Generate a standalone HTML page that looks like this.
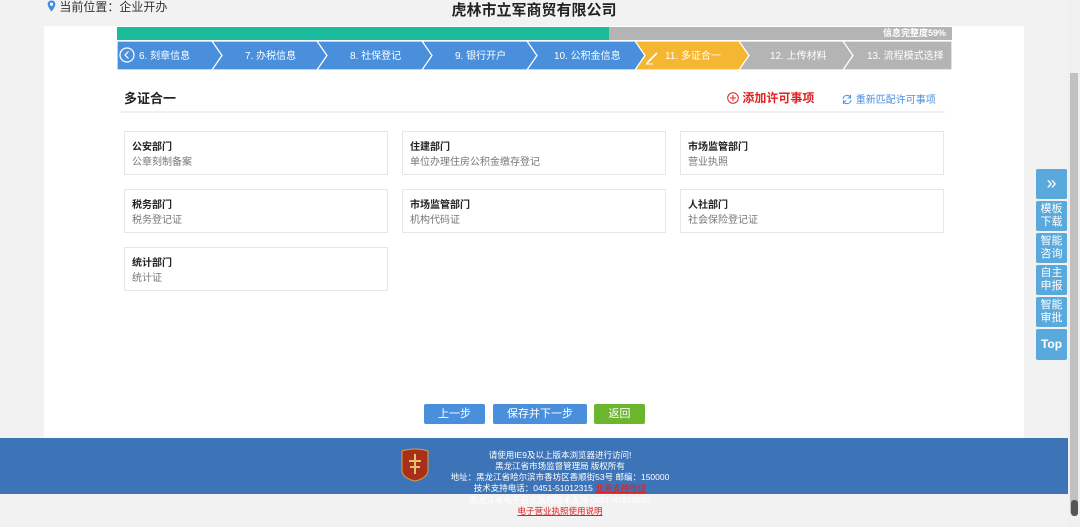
<!DOCTYPE html>
<html><head><meta charset="utf-8"><style>
*{margin:0;padding:0;box-sizing:border-box}
body{width:1080px;height:527px;overflow:hidden;background:#f2f2f2;font-family:"Liberation Sans","Noto Sans CJK SC",sans-serif;position:relative}
.abs{position:absolute}
.card{position:absolute;width:264px;height:44px;border:1px solid #e3e6ea;background:#fff;padding:9px 0 0 7px}
.card b{display:block;font-size:10px;color:#222;line-height:14px}
.card span{display:block;font-size:10px;color:#777;line-height:16px}
.btn{position:absolute;top:404px;height:20px;color:#fff;font-size:11px;text-align:center;line-height:20px;border-radius:2px}
.side{position:absolute;left:1036px;width:31px;background:#5aa9dc;color:#fff;font-size:11px;text-align:center;line-height:13px;border-radius:2px}
</style></head><body>
<div class="abs" style="left:47px;top:0;font-size:12px;color:#333;line-height:14px"><svg width="9" height="12" viewBox="0 0 9 12" style="vertical-align:-1px"><path d="M4.5 0.5C2.3 0.5 0.7 2.1 0.7 4.2 0.7 7 4.5 11.5 4.5 11.5S8.3 7 8.3 4.2C8.3 2.1 6.7 0.5 4.5 0.5z" fill="#3a8ee6"/><circle cx="4.5" cy="4.2" r="1.6" fill="#fff"/></svg> 当前位置：企业开办</div>
<div class="abs" style="left:0;width:1068px;top:-1px;text-align:center;font-size:15px;font-weight:bold;color:#222">虎林市立军商贸有限公司</div>
<div class="abs" style="left:44px;top:26px;width:980px;height:412px;background:#fff"></div>
<div class="abs" style="left:117px;top:27px;width:492px;height:13px;background:#1abc9c"></div>
<div class="abs" style="left:609px;top:27px;width:343px;height:13px;background:#b4b4b4;color:#fff;font-size:9px;font-weight:bold;text-align:right;padding-right:6px;line-height:13px">信息完整度59%</div>
<svg class="abs" style="left:117px;top:41px" width="835" height="29">
<g stroke="#fff" stroke-width="1.2">
<polygon points="0,0 95,0 105,14.5 95,29 0,29" fill="#4a8fdc"/>
<polygon points="95,0 200,0 210,14.5 200,29 95,29 105,14.5" fill="#4a8fdc"/>
<polygon points="200,0 305,0 315,14.5 305,29 200,29 210,14.5" fill="#4a8fdc"/>
<polygon points="305,0 410,0 420,14.5 410,29 305,29 315,14.5" fill="#4a8fdc"/>
<polygon points="410,0 518,0 528,14.5 518,29 410,29 420,14.5" fill="#4a8fdc"/>
<polygon points="518,0 622,0 632,14.5 622,29 518,29 528,14.5" fill="#f5b731"/>
<polygon points="622,0 726,0 736,14.5 726,29 622,29 632,14.5" fill="#b4b4b4"/>
<polygon points="726,0 835,0 835,29 726,29 736,14.5" fill="#b4b4b4"/>
</g>
<circle cx="10" cy="14" r="7" fill="none" stroke="#fff" stroke-width="1.2"/><path d="M11.5 10.5L8 14L11.5 17.5" fill="none" stroke="#fff" stroke-width="1.2"/>
<path d="M531 21L538 14M531 21L530 22.5M538 14L540 12" stroke="#fff" stroke-width="1.6"/><path d="M529 23h7" stroke="#fff"/>
<g fill="#fff" font-size="10" font-family="Liberation Sans,Noto Sans CJK SC,sans-serif">
<text x="22" y="18">6. 刻章信息</text><text x="128" y="18">7. 办税信息</text><text x="233" y="18">8. 社保登记</text><text x="338" y="18">9. 银行开户</text><text x="437" y="18">10. 公积金信息</text><text x="548" y="18">11. 多证合一</text><text x="653" y="18">12. 上传材料</text><text x="750" y="18">13. 流程模式选择</text>
</g></svg>
<div class="abs" style="left:124px;top:88px;font-size:13px;font-weight:bold;color:#222">多证合一</div>
<div class="abs" style="left:120px;top:111px;width:825px;height:2px;background:#f0f0f0"></div>
<div class="abs" style="left:727px;top:89px;font-size:12px;font-weight:bold;color:#e02020"><svg width="12" height="12" style="vertical-align:-2px"><circle cx="6" cy="6" r="5.3" fill="none" stroke="#e02020"/><path d="M3 6h6M6 3v6" stroke="#e02020"/></svg> 添加许可事项</div>
<div class="abs" style="left:841px;top:91px;font-size:10px;color:#4a8fdc"><svg width="12" height="11" style="vertical-align:-2px"><path d="M2 5A4 4 0 0 1 9.5 3.5M10 6A4 4 0 0 1 2.5 7.5" fill="none" stroke="#4a8fdc"/><path d="M9.5 1v3h-3M2.5 10V7h3" fill="none" stroke="#4a8fdc"/></svg> 重新匹配许可事项</div>
<div class="card" style="left:124px;top:131px"><b>公安部门</b><span>公章刻制备案</span></div>
<div class="card" style="left:402px;top:131px"><b>住建部门</b><span>单位办理住房公积金缴存登记</span></div>
<div class="card" style="left:680px;top:131px"><b>市场监管部门</b><span>营业执照</span></div>
<div class="card" style="left:124px;top:189px"><b>税务部门</b><span>税务登记证</span></div>
<div class="card" style="left:402px;top:189px"><b>市场监管部门</b><span>机构代码证</span></div>
<div class="card" style="left:680px;top:189px"><b>人社部门</b><span>社会保险登记证</span></div>
<div class="card" style="left:124px;top:247px"><b>统计部门</b><span>统计证</span></div>
<div class="btn" style="left:424px;width:61px;background:#4a8fdc">上一步</div>
<div class="btn" style="left:493px;width:94px;background:#4a8fdc">保存并下一步</div>
<div class="btn" style="left:594px;width:51px;background:#6cb52e">返回</div>
<div class="abs" style="left:0;top:438px;width:1068px;height:56px;background:#3d74b8"></div>
<svg class="abs" style="left:401px;top:448px" width="28" height="34"><path d="M1 3Q14 -1 27 3V22Q27 30 14 33Q1 30 1 22Z" fill="#a8301a" stroke="#d9a040"/><path d="M14 6v20M8 13h12M9 19h10" stroke="#e8c070" stroke-width="2"/></svg>
<div class="abs" style="left:380px;top:450px;width:360px;text-align:center;color:#fff;font-size:8.5px;line-height:11px">请使用IE9及以上版本浏览器进行访问!<br>黑龙江省市场监督管理局 版权所有<br>地址：黑龙江省哈尔滨市香坊区香顺街53号 邮编：150000<br>技术支持电话：0451-51012315 <u style="color:#e02020">业务支持电话</u></div>
<div class="abs" style="left:380px;top:495px;width:360px;text-align:center;color:#fff;font-size:8.5px;line-height:11px">黑龙江省电子营业执照技术支持 0451-87979695<br><u style="color:#e02020">电子营业执照使用说明</u></div>
<div class="side" style="top:169px;height:30px;font-size:18px;line-height:28px">»</div>
<div class="side" style="top:201px;height:30px;padding-top:2px">模板<br>下载</div>
<div class="side" style="top:233px;height:30px;padding-top:2px">智能<br>咨询</div>
<div class="side" style="top:265px;height:30px;padding-top:2px">自主<br>申报</div>
<div class="side" style="top:297px;height:30px;padding-top:2px">智能<br>审批</div>
<div class="side" style="top:329px;height:31px;font-weight:bold;font-size:12px;line-height:30px">Top</div>
<div class="abs" style="left:1068px;top:0;width:12px;height:527px;background:#f0f0f0"></div>
<div class="abs" style="left:1070px;top:73px;width:8px;height:440px;background:#c1c1c1"></div>
<div class="abs" style="left:1071px;top:500px;width:7px;height:16px;background:#555;border-radius:3px"></div>
</body></html>
